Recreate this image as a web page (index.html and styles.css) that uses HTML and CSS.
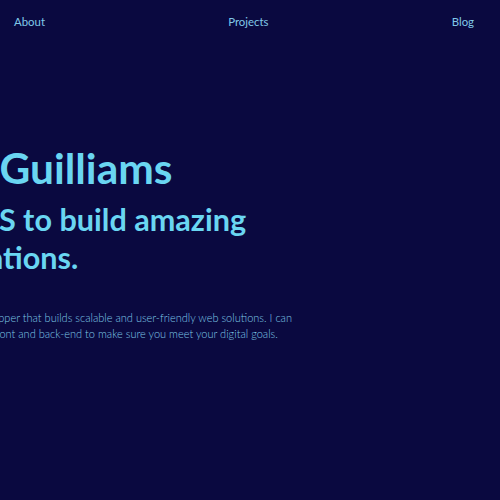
FILE: index.html
```html
<!DOCTYPE html>
<html lang="en">
<head>
<meta charset="utf-8">
<title>Elise Guilliams</title>
<link rel="stylesheet" href="styles.css">
</head>
<body>
<nav class="nav">
  <a class="nav-link" href="#about">About</a>
  <a class="nav-link" href="#projects">Projects</a>
  <a class="nav-link" href="#blog">Blog</a>
</nav>
<main class="hero">
  <h1 class="hero-title"><span class="line line-name">Hi, I'm Elise Guilliams</span></h1>
  <h2 class="hero-sub"><span class="line line-sub1">I use React and Node.JS to build amazing</span><span class="line line-sub2">scalable web applications.</span></h2>
  <p class="hero-text"><span class="line line-p1">I'm a full-stack developper that builds scalable and user-friendly web solutions. I can</span><span class="line line-p2">handle both the front and back-end to make sure you meet your digital goals.</span></p>
</main>
</body>
</html>
```
FILE: styles.css
```css
html, body {
  margin: 0;
  background: #0a0940;
  overflow: hidden;
}
body {
  font-family: Lato, "Open Sans", sans-serif;
  width: 500px;
  height: 500px;
}
.nav {
  display: flex;
  justify-content: space-between;
  padding: 14px 26px 0 14px;
}
.nav-link {
  font-size: 11.4px;
  line-height: 16px;
  color: #80c8e8;
  text-decoration: none;
}
/* The hero is wider than the viewport; its left part is cropped off-screen. */
.hero {
  padding-top: 112px;
  white-space: nowrap;
}
.line { display: block; }
.hero-title {
  margin: 0;
  font-size: 42.5px;
  line-height: 1.2;
  font-weight: 700;
  color: #6ad6f2;
}
.line-name { margin-left: -229px; }
.hero-sub {
  margin: 8px 0 0;
  font-size: 30.6px;
  line-height: 38px;
  font-weight: 700;
  color: #6ad6f2;
}
.line-sub1 { margin-left: -308.5px; }
.line-sub2 { margin-left: -273px; }
.hero-text {
  margin: 33px 0 0;
  font-size: 11px;
  line-height: 16px;
  font-weight: 300;
  color: #7ec8e6;
}
.line-p1 { margin-left: -104.2px; }
.line-p2 { margin-left: -86px; }
```
